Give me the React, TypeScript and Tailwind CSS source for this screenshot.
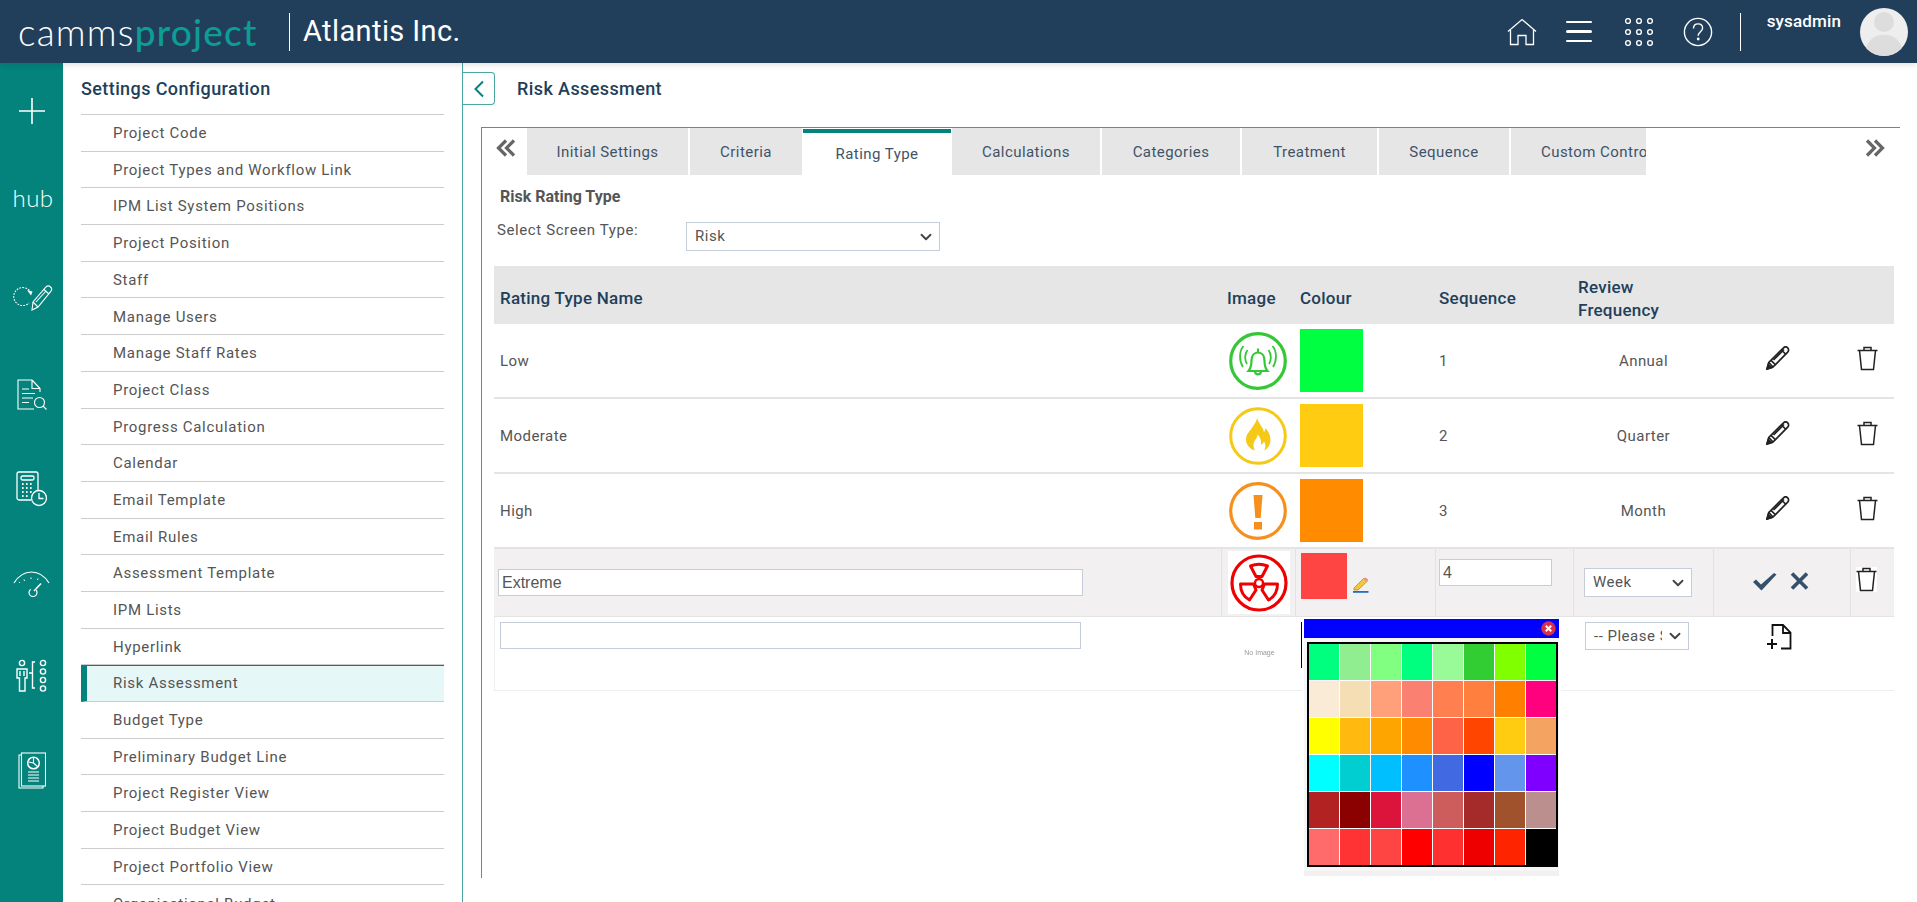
import { ChevronDown } from 'lucide-react'

const menuItems = [
  'Project Code', 'Project Types and Workflow Link', 'IPM List System Positions', 'Project Position', 'Staff',
  'Manage Users', 'Manage Staff Rates', 'Project Class', 'Progress Calculation', 'Calendar', 'Email Template',
  'Email Rules', 'Assessment Template', 'IPM Lists', 'Hyperlink', 'Risk Assessment', 'Budget Type',
  'Preliminary Budget Line', 'Project Register View', 'Project Budget View', 'Project Portfolio View', 'Organisational Budget',
]

const tabs = [
  { name: 'Initial Settings', width: 'w-[163px]' },
  { name: 'Criteria', width: 'w-[114px]' },
  { name: 'Rating Type', width: 'w-[148px]', active: true },
  { name: 'Calculations', width: 'w-[150px]' },
  { name: 'Categories', width: 'w-[140px]' },
  { name: 'Treatment', width: 'w-[137px]' },
  { name: 'Sequence', width: 'w-[132px]' },
]

const swatches = [
  '#00ff7f', '#90ee90', '#80ff80', '#00ff7f', '#98fb98', '#32cd32', '#7fff00', '#00ff40',
  '#faebd7', '#f5deb3', '#ffa07a', '#fa8072', '#ff7f50', '#ff7f3f', '#ff7f00', '#ff007f',
  '#ffff00', '#ffb90f', '#ffa500', '#ff8c00', '#ff6347', '#ff4500', '#ffcc11', '#f4a460',
  '#00ffff', '#00ced1', '#00bfff', '#1e90ff', '#4169e1', '#0000ff', '#6495ed', '#7f00ff',
  '#b22222', '#8b0000', '#dc143c', '#db7093', '#cd5c5c', '#a52a2a', '#a0522d', '#bc8f8f',
  '#ff6a6a', '#ff3333', '#ff4444', '#ff0000', '#ff3030', '#ee0000', '#ff2400', '#000000',
]

const gridCols = 'grid grid-cols-[727px_75px_139px_139px_139px_138px_42px]'

function HomeIcon() {
  return (
    <svg width="30" height="28" viewBox="0 0 30 28" fill="none" stroke="white" strokeWidth="1.3">
      <path d="M1 13.5 15 1.5l14 12" />
      <path d="M3.5 12v14.5h7.5v-9h8v9h7.5V12" />
    </svg>
  )
}

function AppsIcon() {
  const spots = [3, 14, 25]
  return (
    <svg width="28" height="28" viewBox="0 0 28 28" fill="none" stroke="white" strokeWidth="1.4">
      {spots.map((y) => spots.map((x) => <circle key={`${x}-${y}`} cx={x} cy={y} r="2.4" />))}
    </svg>
  )
}

function HelpIcon() {
  return (
    <svg width="30" height="30" viewBox="0 0 30 30" fill="none" stroke="white" strokeWidth="1.4">
      <circle cx="15" cy="15" r="13.6" />
      <path d="M10.5 11.5c0-3 2-4.6 4.6-4.6s4.5 1.6 4.5 4.2c0 3.6-4.4 3.7-4.4 7.7" />
      <circle cx="15.2" cy="22" r="0.7" fill="white" />
    </svg>
  )
}

function PlusIcon() {
  return (
    <svg width="28" height="28" viewBox="0 0 28 28" stroke="white" strokeWidth="1.6">
      <path d="M14 1v26M1 14h26" />
    </svg>
  )
}

function RefreshPencilIcon() {
  return (
    <svg width="42" height="26" viewBox="0 0 42 26" fill="none" stroke="white" strokeWidth="1.1">
      <path d="M19 8A9 9 0 1 0 17 18" strokeDasharray="1.8 1.2" />
      <path d="M15 5l5.500 1.500-1.500 4z" fill="white" stroke="none" />
      <path d="M20 25l1-8L34 2c1.200-1.200 3.200-1.200 4.500 0s1.500 3 .3 4.300L26 22z" />
      <path d="M21 17l5 5M32 4.500l5 4.500M24 17l10-11" />
    </svg>
  )
}

function DocSearchIcon() {
  return (
    <svg width="30" height="31" viewBox="0 0 30 31" fill="none" stroke="white" strokeWidth="1.1">
      <path d="M15 1H1v29h16M15 1l8 8.500V13M15 1v8.500h8" />
      <path d="M5 10h7M5 14.500h13M5 19h11M5 23.500h7" />
      <circle cx="22.500" cy="23.500" r="5" />
      <path d="M26 27l3.500 3.500" />
    </svg>
  )
}

function CalcClockIcon() {
  return (
    <svg width="32" height="36" viewBox="0 0 32 36" fill="none" stroke="white" strokeWidth="1.3">
      <path d="M15 29H3a2 2 0 0 1-2-2V3a2 2 0 0 1 2-2h17a2 2 0 0 1 2 2v17" />
      <rect x="5" y="5" width="13" height="4" rx="1.500" />
      <path d="M6 13h10M6 17h10M6 21h10M6 25h6" strokeDasharray="1.600 2.400" strokeWidth="1.800" />
      <circle cx="23" cy="27" r="7.500" fill="#04837c" />
      <path d="M23 22v5.500h4.500" />
    </svg>
  )
}

function GaugeIcon() {
  return (
    <svg width="37" height="27" viewBox="0 0 37 27" fill="none" stroke="white" strokeWidth="1.2">
      <path d="M1 12C6 4 12 1 18.500 1S31 4 36 12" />
      <path d="M11 8.500l.5 1.500M18 6.500v1.500M25 7.500l-.5 1.500M6 11l1 1" strokeWidth="1" />
      <circle cx="20" cy="21.500" r="4" strokeDasharray="16 6" />
      <path d="M21 20l7-7.500" strokeWidth="1.500" />
    </svg>
  )
}

function PeopleListIcon() {
  return (
    <svg width="32" height="33" viewBox="0 0 32 33" fill="none" stroke="white" strokeWidth="1.4">
      <circle cx="6" cy="4" r="2.600" />
      <path d="M1 10h10v9H9v13H3.500V19H1zM4 12v5M8 12v5" />
      <path d="M19 3h-2.500v11H13h3.500v15H19" />
      <circle cx="27" cy="4" r="2.600" />
      <circle cx="27" cy="12.500" r="2.600" />
      <circle cx="27" cy="21" r="2.600" />
      <circle cx="27" cy="29.500" r="2.600" />
    </svg>
  )
}

function ReportIcon() {
  return (
    <svg width="28" height="37" viewBox="0 0 28 37" fill="none" stroke="white" strokeWidth="1.1">
      <path d="M3 3H1v33h24v-2" />
      <rect x="3.500" y="1" width="24" height="33" />
      <circle cx="15.500" cy="11" r="5.800" strokeWidth="1.500" />
      <path d="M15.500 5.500V11l4 3.500M15.500 11l-5 -1" />
      <path d="M10 20h11M10 23h11M10 26h11M10 29h11" />
    </svg>
  )
}

function DoubleChevron({ left }: { left?: boolean }) {
  return (
    <svg width="20" height="18" viewBox="0 0 20 18" fill="none" stroke="#666" strokeWidth="3.200" className={left ? '' : 'rotate-180'}>
      <path d="M10 1.500 2.500 9l7.500 7.500M18 1.500 10.500 9l7.500 7.500" />
    </svg>
  )
}

function BellIcon() {
  return (
    <svg width="58" height="58" viewBox="0 0 58 58" fill="none" stroke="#35c735">
      <circle cx="29" cy="29" r="27.300" strokeWidth="3.200" />
      <path d="M19.500 39c2.500-3 3-5.500 3-10.500 0-5 2.800-8 6.500-8s6.500 3 6.500 8c0 5 .5 7.500 3 10.500z" strokeWidth="2.200" />
      <path d="M29 16.500v4M26 39c0 4.500 6 4.500 6 0" strokeWidth="2.200" />
      <path d="M18 32c-2.500-4-2.500-10 .5-14M14 35c-4-6-4-16 .5-21M40 32c2.500-4 2.500-10-.5-14M44 35c4-6 4-16-.5-21" strokeWidth="1.800" />
    </svg>
  )
}

function FlameIcon() {
  return (
    <svg width="58" height="58" viewBox="0 0 58 58" fill="none">
      <circle cx="29" cy="29" r="27.300" stroke="#f5c916" strokeWidth="3" />
      <path fill="#f5c916" d="M28 11c2 6 6 9 7 14 1-1 1.500-3 1.500-4 3.500 4 5 8 5 12 0 5-3 9-6.500 10.500 2-3 2-6 0-9-1 2-2 3-3 3 .5-4-1-8-3.500-10 0 4-4 6-4 10.500 0 2 .5 4 1.500 5.500-5-1.500-9-5.500-9-11 0-6 4-8 6.500-12.500C26 16.500 27.500 14 28 11z" />
    </svg>
  )
}

function AlertIcon() {
  return (
    <svg width="58" height="58" viewBox="0 0 58 58" fill="none">
      <circle cx="29" cy="29" r="27.300" stroke="#f78f1e" strokeWidth="3.200" />
      <path fill="#f78f1e" d="M24.500 13h9l-1.800 23h-5.400zM25 40h8v7.500h-8z" />
    </svg>
  )
}

function RadiationIcon() {
  return (
    <svg width="58" height="58" viewBox="0 0 58 58" fill="none" stroke="#f00000" strokeLinejoin="round">
      <circle cx="29" cy="29" r="27" strokeWidth="3.200" />
      <circle cx="29" cy="29" r="4" strokeWidth="2.400" />
      <path d="M20.500 12c5-2 12-2 17 0l-5.500 10.500h-6z" strokeWidth="3" />
      <path d="M10.500 30h13l2.500 6-6.500 10C14 43 10.500 37 10.500 30z" strokeWidth="3" />
      <path d="M47.500 30h-13L32 36l6.500 10C44 43 47.500 37 47.500 30z" strokeWidth="3" />
    </svg>
  )
}

function PencilIcon() {
  return (
    <svg width="24" height="24" viewBox="0 0 24 24" fill="none" stroke="#222" strokeWidth="1.700">
      <path d="M1 23l1.800-6.500L17.500 1.800c1.200-1.200 3-1.200 4.200 0s1.200 3.200 0 4.400L7 21z" />
      <path d="M2.800 16.500 7 21M5 14.300l4.700 4.700M7.500 14 18 3.500M15.500 4l4.500 4.500" />
      <path d="M1 23l1.300-4.500 3.200 3.200z" fill="#222" />
    </svg>
  )
}

function TrashIcon() {
  return (
    <svg width="21" height="25" viewBox="0 0 21 25" fill="none" stroke="#222" strokeWidth="1.500">
      <path d="M.5 4.500h20M7 4.500V1.500h7v3" />
      <path d="M2.500 4.500 4.500 23.500h12l2-19" />
    </svg>
  )
}

function FilePlusIcon() {
  return (
    <svg width="25" height="26" viewBox="0 0 25 26" fill="none" stroke="#111" strokeWidth="1.800">
      <path d="M5.500 12V1h10.500l7.500 7.500V24.500H14" />
      <path d="M16 1v8h7.500" />
      <path d="M0 20h10M5 15v10" strokeWidth="2" />
    </svg>
  )
}

function SmallPencil() {
  return (
    <svg width="16" height="16" viewBox="0 0 16 16" fill="none">
      <path d="M1 11 10.500 1.500 14.500 4 5 13H1z" fill="#f4c63d" stroke="#b98a2e" strokeWidth="0.800" />
      <path d="M10.500 1.500 14.500 4 15 2.500 12.500.5z" fill="#e58a8a" />
      <path d="M0 14h15.500v1.800H0z" fill="#1f6fc4" />
    </svg>
  )
}

function Select({ value, className }: { value: string; className: string }) {
  return (
    <div className={`relative ${className}`}>
      <select className="h-full w-full appearance-none border border-[#c5cdd8] bg-white pl-[8px] pr-[26px] text-[15px] tracking-[0.5px] text-[#555]" defaultValue={value}>
        <option>{value}</option>
      </select>
      <ChevronDown size={18} strokeWidth={2.500} className="pointer-events-none absolute right-[5px] top-1/2 -translate-y-1/2 text-[#444]" />
    </div>
  )
}

function ColorPicker() {
  return (
    <div className="absolute left-[5px] top-0 z-10 h-[260px] w-[259px] bg-white pl-[2px] pt-[2px]">
      <div className="absolute -left-px top-[5px] h-[46px] w-px bg-black" />
      <div className="flex h-[19px] w-[255px] items-center justify-end bg-[#0000ff] pr-[3px]">
        <svg width="15" height="15" viewBox="0 0 15 15">
          <circle cx="7.500" cy="7.500" r="7.200" fill="#d9304a" />
          <path d="M4.800 4.800l5.400 5.400M10.200 4.800l-5.400 5.400" stroke="white" strokeWidth="2" />
        </svg>
      </div>
      <div className="h-[233px] w-[255px] bg-[#f7f6f6] pl-[3px] pt-[4px]">
        <div className="grid w-[251px] grid-cols-8 gap-px border-2 border-black bg-white">
          {swatches.map((c, i) => (
            <div key={i} className="h-[36px] w-[30px]" style={{ backgroundColor: c }} />
          ))}
        </div>
      </div>
      <div className="h-[5px] w-[255px] bg-[#f2f0f1]" />
    </div>
  )
}

const savedRows = [
  { name: 'Low', icon: <BellIcon />, colour: 'bg-[#00ff40]', seq: '1', freq: 'Annual' },
  { name: 'Moderate', icon: <FlameIcon />, colour: 'bg-[#ffcc11]', seq: '2', freq: 'Quarter' },
  { name: 'High', icon: <AlertIcon />, colour: 'bg-[#ff8c00]', seq: '3', freq: 'Month' },
]

export default function App() {
  return (
    <div className="flex h-screen w-full flex-col overflow-hidden bg-white font-['Roboto',sans-serif] text-[15px] tracking-[0.45px] text-[#555]">
      {/* Top bar */}
      <header className="relative z-20 flex h-[63px] shrink-0 items-center bg-[#213f5b] tracking-normal shadow-[0_2px_6px_rgba(0,0,0,0.12)]">
        <div className="ml-[18px] flex w-[271px] items-baseline font-['Lato',sans-serif] text-[37px] leading-none tracking-[1.200px]">
          <span className="font-light text-white">camms</span>
          <span className="font-medium text-[#0e9c96]">project</span>
        </div>
        <div className="h-[38px] w-px bg-white" />
        <div className="ml-[13px] text-[29px] tracking-[0.4px] text-white">Atlantis Inc.</div>
        <div className="ml-auto flex items-center">
          <HomeIcon />
          <div className="ml-[29px] flex flex-col gap-[7px]">
            <div className="h-[2.500px] w-[26px] rounded-full bg-white" />
            <div className="h-[2.500px] w-[26px] rounded-full bg-white" />
            <div className="h-[2.500px] w-[26px] rounded-full bg-white" />
          </div>
          <div className="ml-[33px]"><AppsIcon /></div>
          <div className="ml-[30px]"><HelpIcon /></div>
          <div className="ml-[27px] h-[38px] w-px bg-white" />
          <div className="ml-[26px] mb-[21px] text-[17px] font-medium leading-none tracking-[0.15px] text-white">sysadmin</div>
          <div className="relative ml-[19px] mr-[9px] h-[48px] w-[48px] overflow-hidden rounded-full bg-[#eeeeee]">
            <div className="absolute left-[14px] top-[4px] h-[20px] w-[20px] rounded-full bg-[#dddddd]" />
            <div className="absolute left-[6px] top-[27px] h-[30px] w-[36px] rounded-t-[16px] bg-[#dddddd]" />
          </div>
        </div>
      </header>

      <div className="flex min-h-0 flex-1">
        {/* Icon rail */}
        <nav className="flex w-[63px] shrink-0 flex-col items-center bg-[#04837c] text-white">
          <div className="mt-[34px]"><PlusIcon /></div>
          <div className="ml-[3px] mt-[61px] font-['Lato',sans-serif] text-[24px] font-light leading-none tracking-[0.5px]">hub</div>
          <div className="mt-[75px] ml-[2px]"><RefreshPencilIcon /></div>
          <div className="mt-[68px]"><DocSearchIcon /></div>
          <div className="mt-[61px]"><CalcClockIcon /></div>
          <div className="mt-[64px]"><GaugeIcon /></div>
          <div className="mt-[61px]"><PeopleListIcon /></div>
          <div className="mt-[60px]"><ReportIcon /></div>
        </nav>

        {/* Settings list */}
        <aside className="w-[400px] shrink-0 overflow-hidden border-r-[1.500px] border-[#4aa6a0] pl-[18px] pr-[18px]">
          <h2 className="flex h-[51px] items-center text-[18px] font-medium tracking-[0.4px] text-[#213f5b]">Settings Configuration</h2>
          <ul className="border-t border-[#cccccc]">
            {menuItems.map((item) => {
              const active = item === 'Risk Assessment'
              return (
                <li
                  key={item}
                  className={
                    active
                      ? 'flex h-[36.700px] items-center border-b border-t border-b-[#cccccc] border-t-[#04837c] border-l-[6px] border-l-[#04837c] bg-[#e6f7f7] pl-[26px] tracking-[0.7px]'
                      : 'flex h-[36.700px] items-center border-b border-[#cccccc] pl-[32px] pt-[1px] tracking-[0.7px]'
                  }
                >
                  {item}
                </li>
              )
            })}
          </ul>
        </aside>

        {/* Main */}
        <main className="min-w-0 flex-1">
          <div className="flex h-[64px] items-start">
            <button className="mt-[9px] flex h-[33px] w-[32px] items-center justify-center rounded-r-[4px] border border-l-0 border-[#4aa6a0]">
              <svg width="12" height="18" viewBox="0 0 12 18" fill="none" stroke="#04837c" strokeWidth="2">
                <path d="M10 1.500 2.500 9 10 16.500" />
              </svg>
            </button>
            <h1 className="ml-[22px] mt-[15px] text-[18px] font-medium leading-[22px] tracking-[0.4px] text-[#213f5b]">Risk Assessment</h1>
          </div>

          <div className="ml-[18px] h-[751px] w-[1419px] border-l border-t border-[#808080]">
            {/* Tabs */}
            <div className="flex h-[47px] text-[#3f5368]">
              <div className="flex w-[44px] items-center justify-center pb-[8px] pl-[4px]"><DoubleChevron left /></div>
              {tabs.map((t) =>
                t.active ? (
                  <div key={t.name} className={`mt-[1px] flex ${t.width} items-center justify-center border-t-[4px] border-t-[#04837c] bg-white pt-[1px]`}>{t.name}</div>
                ) : (
                  <div key={t.name} className={`flex ${t.width} items-center justify-center`}>
                    <div className="flex h-full w-[calc(100%-2px)] items-center justify-center bg-[#e6e6e6] pt-[1px]">{t.name}</div>
                  </div>
                ),
              )}
              <div className="ml-px w-[135px] overflow-hidden whitespace-nowrap bg-[#e6e6e6] pl-[30px] pt-[1px] leading-[47px]">Custom Controls</div>
              <div className="ml-auto flex items-center pb-[8px] pr-[15px]"><DoubleChevron /></div>
            </div>

            <div className="ml-[18px] mt-[12px] text-[16px] font-bold leading-[20px] tracking-normal text-[#555]">Risk Rating Type</div>
            <div className="mt-[15px] flex h-[29px] items-start">
              <label className="ml-[15px] w-[189px] text-[15px] leading-[17px] tracking-[0.6px]">Select Screen Type:</label>
              <Select value="Risk" className="h-[29px] w-[254px]" />
            </div>

            {/* Rating table */}
            <div className="ml-[12px] mt-[15px] w-[1400px]">
              <div className={`${gridCols} h-[58px] items-center bg-[#e6e6e6] pt-[8px] text-[17px] font-medium tracking-[0.25px] text-[#213f5b]`}>
                <div className="pl-[6px]">Rating Type Name</div>
                <div className="pl-[6px]">Image</div>
                <div className="pl-[4px]">Colour</div>
                <div className="pl-[4px]">Sequence</div>
                <div className="pl-[4px] leading-[23px]">Review<br />Frequency</div>
              </div>

              {savedRows.map((r) => (
                <div key={r.name} className={`${gridCols} h-[75px] items-center border-b-2 border-[#e4e4e4]`}>
                  <div className="pl-[6px] pt-[2px]">{r.name}</div>
                  <div className="flex justify-center pr-[1px]">{r.icon}</div>
                  <div className="pl-[4px]"><div className={`h-[63px] w-[63px] ${r.colour}`} /></div>
                  <div className="pl-[4px] pt-[2px]">{r.seq}</div>
                  <div className="pt-[2px] text-center">{r.freq}</div>
                  <div className="flex justify-center pb-[6px] pr-[8px]"><PencilIcon /></div>
                  <div className="flex justify-start pb-[4px] pl-[6px]"><TrashIcon /></div>
                </div>
              ))}

              {/* Row in edit mode */}
              <div className={`${gridCols} h-[68px] border-b border-[#e4e4e4] bg-[#f2f0f1]`}>
                <div className="flex items-center pl-[4px]">
                  <input className="h-[27px] w-[585px] border border-[#c5cdd8] bg-white pl-[3px] font-['Liberation_Sans',sans-serif] text-[16px] tracking-normal text-[#555]" defaultValue="Extreme" />
                </div>
                <div className="flex items-center justify-center border-x border-[#e2e2e2]">
                  <div className="flex h-[63px] w-[62px] items-center justify-center bg-white"><RadiationIcon /></div>
                </div>
                <div className="flex items-start pl-[5px] pt-[4px]">
                  <div className="h-[46px] w-[46px] bg-[#ff4444]" />
                  <div className="ml-[6px] mt-[24px]"><SmallPencil /></div>
                </div>
                <div className="border-x border-[#e2e2e2] pl-[3px] pt-[10px]">
                  <input className="h-[27px] w-[113px] border border-[#c5cdd8] bg-white pl-[3px] font-['Liberation_Sans',sans-serif] text-[16px] tracking-normal text-[#555]" defaultValue="4" />
                </div>
                <div className="flex items-center pl-[10px]">
                  <Select value="Week" className="h-[29px] w-[108px]" />
                </div>
                <div className="flex items-center justify-center gap-[13px] border-x border-[#e2e2e2] pb-[4px] pr-[2px] text-[#35506a]">
                  <svg width="24" height="20" viewBox="0 0 24 20" fill="#35506a"><path d="M0 11l3-2.500 5 5L21 2l2.500 1.500L8.500 19.500z" /></svg>
                  <svg width="19" height="18" viewBox="0 0 19 18" stroke="#35506a" strokeWidth="3.600"><path d="M2 1.500 17 16.500M17 1.500 2 16.500" /></svg>
                </div>
                <div className="flex items-center pl-[5px] pb-[6px]"><div className="bg-white"><TrashIcon /></div></div>
              </div>

              {/* New row */}
              <div className={`${gridCols} h-[74px] border-b border-l border-[#eeeeee]`}>
                <div className="pl-[5px] pt-[5px]">
                  <input className="h-[27px] w-[581px] border border-[#c5cdd8] bg-white" />
                </div>
                <div className="flex items-center justify-center font-['Liberation_Sans',sans-serif] text-[7px] tracking-normal text-[#999] blur-[0.3px]">No Image</div>
                <div className="relative"><ColorPicker /></div>
                <div />
                <div className="pl-[10px] pt-[5px]">
                  <Select value="-- Please Select --" className="h-[28px] w-[104px]" />
                </div>
                <div className="flex justify-center pr-[8px] pt-[7px]"><FilePlusIcon /></div>
                <div />
              </div>
            </div>
          </div>
        </main>
      </div>
    </div>
  )
}
